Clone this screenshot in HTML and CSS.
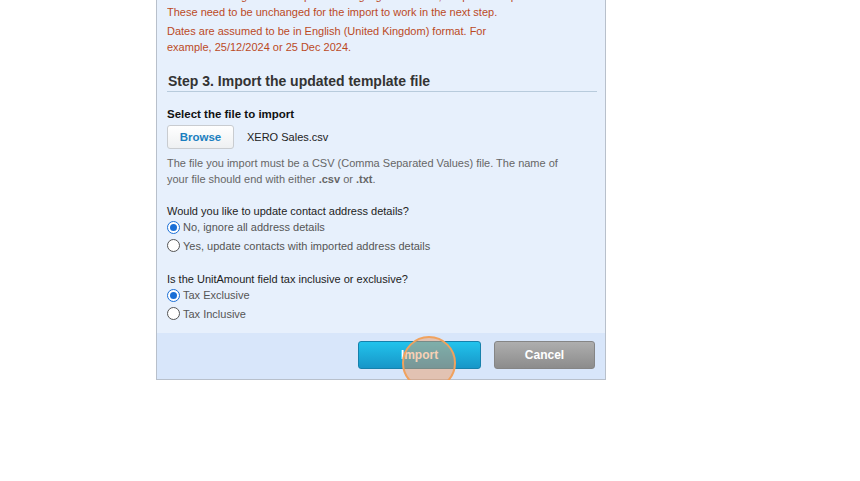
FILE: index.html
```html
<!DOCTYPE html>
<html lang="en">
<head>
  <meta charset="UTF-8" />
  <title>Import Sales</title>
  <link rel="stylesheet" href="styles.css">
</head>
<body>

  <div class="dialog">
    <div class="dialog-body">
      <p class="note">Column headings in the template are highlighted in bold; keep them in place and in this order. Keep the top row.<br>These need to be unchanged for the import to work in the next step.</p>
      <p class="note">Dates are assumed to be in English (United Kingdom) format. For<br>example, 25/12/2024 or 25 Dec 2024.</p>

      <h3 class="step">Step 3. Import the updated template file</h3>

      <div class="field">
        <label class="field-label">Select the file to import</label>
        <div class="file-row">
          <button class="btn-browse">Browse</button>
          <span class="file-name">XERO Sales.csv</span>
        </div>
        <p class="hint">The file you import must be a CSV (Comma Separated Values) file. The name of<br>your file should end with either <b>.csv</b> or <b>.txt</b>.</p>
      </div>

      <div class="question">
        <p>Would you like to update contact address details?</p>
        <label class="radio"><span class="dot checked"></span>No, ignore all address details</label>
        <label class="radio"><span class="dot"></span>Yes, update contacts with imported address details</label>
      </div>

      <div class="question">
        <p>Is the UnitAmount field tax inclusive or exclusive?</p>
        <label class="radio"><span class="dot checked"></span>Tax Exclusive</label>
        <label class="radio"><span class="dot"></span>Tax Inclusive</label>
      </div>
    </div>

    <div class="dialog-footer">
      <button class="btn btn-import">Import
        <span class="click-ring"></span>
      </button>
      <button class="btn btn-cancel">Cancel</button>
    </div>
  </div>

</body>
</html>
```

FILE: styles.css
```css
* {
  margin: 0;
  padding: 0;
  box-sizing: border-box;
}

body {
  background: #fff;
  font-family: "Liberation Sans", Arial, sans-serif;
  font-size: 11px;
  color: #222;
  overflow: hidden;
}

.dialog {
  width: 450px;
  margin: -14px 0 0 156px;
  border: 1px solid #b8c0cb;
  border-top: none;
  background: #e7f0fc;
}

.dialog-body {
  padding: 2px 8px 10px 10px;
}

.note {
  color: #bb4a1f;
  line-height: 16px;
  margin-bottom: 3px;
  white-space: nowrap;
  overflow: hidden;
}

.step {
  font-size: 14px;
  color: #333;
  margin-top: 17px;
  padding: 0 0 1px 1px;
  line-height: 18px;
  border-bottom: 1px solid #b8cbdc;
}

.field {
  margin-top: 14px;
}

.field-label {
  display: block;
  font-weight: bold;
  font-size: 11.5px;
  color: #111;
  line-height: 16px;
}

.file-row {
  display: flex;
  align-items: center;
  gap: 13px;
  margin-top: 3px;
}

.btn-browse {
  width: 67px;
  height: 24px;
  border: 1px solid #c9ccd0;
  border-radius: 3px;
  background: linear-gradient(#ffffff, #eef0f2);
  color: #1b7fc0;
  font-family: inherit;
  font-size: 11.5px;
  font-weight: bold;
}

.file-name {
  color: #222;
}

.hint {
  color: #666;
  line-height: 16px;
  margin-top: 6px;
}

.question {
  margin-top: 16px;
  line-height: 16px;
}

.question p {
  margin-bottom: -1px;
}

.radio {
  display: flex;
  align-items: center;
  gap: 3px;
  height: 18.5px;
  color: #555;
}

.dot {
  position: relative;
  width: 13px;
  height: 13px;
  border: 1px solid #555;
  border-radius: 50%;
  background: #fff;
}

.dot.checked {
  border-color: #1a6fd6;
  background: #fff;
}

.dot.checked::after {
  content: "";
  position: absolute;
  top: 2px;
  left: 2px;
  width: 7px;
  height: 7px;
  border-radius: 50%;
  background: #1a6fd6;
}

.dialog-footer {
  display: flex;
  justify-content: flex-end;
  gap: 13px;
  padding: 8px 10px 10px;
  background: #d8e6fa;
}

.btn {
  position: relative;
  height: 28px;
  border-radius: 3px;
  color: #fff;
  font-family: inherit;
  font-size: 12px;
  font-weight: bold;
}

.btn-import {
  width: 123px;
  border: 1px solid #1681ac;
  background: linear-gradient(#22c3ec, #1796c8);
}

.btn-cancel {
  width: 101px;
  border: 1px solid #858585;
  background: linear-gradient(#aeaeae, #8c8c8c);
}

.click-ring {
  position: absolute;
  left: 43px;
  top: -6px;
  width: 54px;
  height: 54px;
  border: 2px solid #f0a25e;
  border-radius: 50%;
  background: rgba(240, 150, 90, 0.45);
}
```
